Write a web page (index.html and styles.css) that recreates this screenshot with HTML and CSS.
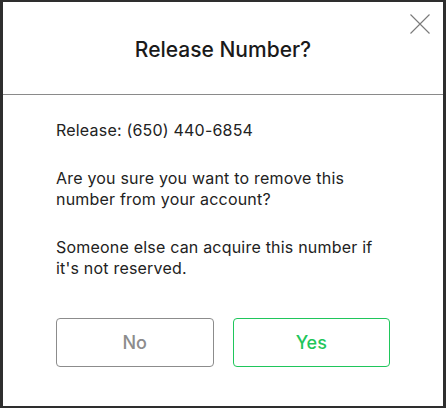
FILE: index.html
```html
<!DOCTYPE html>
<html>
<head>
<meta charset="utf-8">
<link rel="stylesheet" href="styles.css">
</head>
<body>
<div class="modal">
  <div class="modal-header">
    <h2 class="title">Release Number?</h2>
    <button class="close" aria-label="Close">
      <svg width="20" height="20" viewBox="0 0 20 20"><path d="M0.5 0.5 L19.5 19.5 M19.5 0.5 L0.5 19.5" stroke="#7a7a7a" stroke-width="1.1" fill="none"/></svg>
    </button>
  </div>
  <div class="modal-body">
    <p>Release: (650) 440-6854</p>
    <p>Are you sure you want to remove this number from your account?</p>
    <p>Someone else can acquire this number if it's not reserved.</p>
    <div class="actions">
      <button class="btn btn-no">No</button>
      <button class="btn btn-yes">Yes</button>
    </div>
  </div>
</div>
</body>
</html>
```

FILE: styles.css
```css
html, body {
  margin: 0;
  height: 100%;
}
body {
  background: #2e2e2e;
  padding: 2px 3px 2px 3px;
  box-sizing: border-box;
  font-family: Inter, "Liberation Sans", sans-serif;
}
.modal {
  width: 440px;
  height: 404px;
  background: #fff;
  position: relative;
  display: flex;
  flex-direction: column;
}
.modal-header {
  height: 92px;
  border-bottom: 1px solid #8a8a8a;
  display: flex;
  align-items: center;
  justify-content: center;
}
.title {
  margin: 2px 0 0 0;
  font-size: 21px;
  font-weight: 500;
  color: #1a1a1a;
}
.close {
  position: absolute;
  top: 12px;
  right: 13px;
  background: none;
  border: 0;
  padding: 0;
  width: 20px;
  height: 20px;
  cursor: pointer;
}
.close svg { display: block; }
.modal-body {
  padding: 25px 53px 0 53px;
  color: #222;
  font-size: 16px;
  line-height: 21.5px;
  letter-spacing: 0.2px;
}
.modal-body p {
  margin: 0 0 26px 0;
}
.actions {
  display: flex;
  gap: 19px;
  margin-top: 38px;
}
.btn {
  flex: 1;
  height: 49px;
  border-radius: 4px;
  background: #fff;
  font-family: Inter, "Liberation Sans", sans-serif;
  font-size: 18px;
  font-weight: 500;
  letter-spacing: 0;
  cursor: pointer;
}
.btn-no {
  border: 1px solid #8c8c8c;
  color: #8c8c8c;
}
.btn-yes {
  border: 1px solid #1fc65b;
  color: #1fc65b;
}
```
